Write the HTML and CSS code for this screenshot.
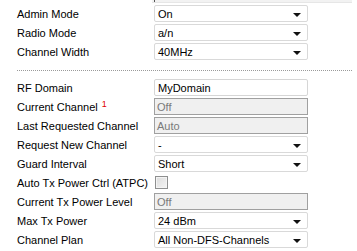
FILE: index.html
```
<!DOCTYPE html>
<html>
<head>
<meta charset="utf-8">
<link rel="stylesheet" href="styles.css">
</head>
<body>
<div class="page">
  <div class="topbar"><span class="topbar-edge"></span></div>
  <div class="form">
    <div class="label">Admin Mode</div>
    <div class="field select"><span>On</span><i class="arrow"></i></div>
    <div class="label">Radio Mode</div>
    <div class="field select"><span>a/n</span><i class="arrow"></i></div>
    <div class="label">Channel Width</div>
    <div class="field select"><span>40MHz</span><i class="arrow"></i></div>
  </div>
  <div class="sep"></div>
  <div class="form">
    <div class="label">RF Domain</div>
    <div class="field input"><span>MyDomain</span></div>
    <div class="label">Current Channel <span class="note">1</span></div>
    <div class="field disabled"><span>Off</span></div>
    <div class="label">Last Requested Channel</div>
    <div class="field disabled"><span>Auto</span></div>
    <div class="label">Request New Channel</div>
    <div class="field select"><span>-</span><i class="arrow"></i></div>
    <div class="label">Guard Interval</div>
    <div class="field select"><span>Short</span><i class="arrow"></i></div>
    <div class="label">Auto Tx Power Ctrl (ATPC)</div>
    <div class="check-cell"><span class="checkbox"></span></div>
    <div class="label">Current Tx Power Level</div>
    <div class="field disabled"><span>Off</span></div>
    <div class="label">Max Tx Power</div>
    <div class="field select"><span>24 dBm</span><i class="arrow"></i></div>
    <div class="label">Channel Plan</div>
    <div class="field select"><span>All Non-DFS-Channels</span><i class="arrow"></i></div>
  </div>
</div>
</body>
</html>
```
FILE: styles.css
```
html, body {
  margin: 0;
  padding: 0;
  background: #ffffff;
}
body {
  font-family: "Liberation Sans", Arial, sans-serif;
  font-size: 11px;
  color: #000;
}
.page {
  width: 357px;
  height: 251px;
  overflow: hidden;
}
.topbar {
  margin-left: 152px;
  width: 200px;
  height: 3px;
  background: #f2f2f2;
  border-bottom: 1px solid #e6e6e6;
  box-sizing: border-box;
  display: flex;
}
.topbar-edge {
  width: 1px;
  height: 2px;
  margin-left: 2px;
  background: #555;
}
.form {
  display: grid;
  grid-template-columns: 137px 154px;
  grid-auto-rows: 17px;
  row-gap: 2px;
  padding-left: 17px;
}
.topbar + .form {
  margin-top: 2px;
}
.label {
  display: flex;
  align-items: center;
  white-space: nowrap;
  color: #000;
}
.note {
  color: #e00000;
  font-size: 9px;
  margin-left: 4px;
  align-self: flex-start;
  margin-top: 1px;
}
.field {
  box-sizing: border-box;
  display: flex;
  align-items: center;
  justify-content: space-between;
  padding: 0 6px 0 3px;
  border: 1px solid #d4d4d4;
  border-radius: 2px;
  background: #fff;
}
.select {
  border-color: #d9d9d9;
}
.input {
  border-color: #d6d6d6;
}
.disabled {
  background: #f0f0f0;
  border: 1px solid #a0a0a0;
  border-radius: 0;
  color: #7a7a7a;
  padding-left: 2px;
}
.arrow {
  width: 0;
  height: 0;
  border-left: 4px solid transparent;
  border-right: 4px solid transparent;
  border-top: 4px solid #111;
  margin-top: 2px;
}
.check-cell {
  display: flex;
  align-items: center;
  padding-left: 1px;
}
.checkbox {
  box-sizing: border-box;
  width: 13px;
  height: 13px;
  border: 1px solid #8e8f8f;
  background: linear-gradient(135deg, #dcdcdc 0%, #f4f4f4 100%);
  box-shadow: inset 0 0 0 1px #f4f4f4;
}
.sep {
  margin: 10px 5px 8px 17px;
  border-top: 1px dotted #9a9a9a;
}
```
